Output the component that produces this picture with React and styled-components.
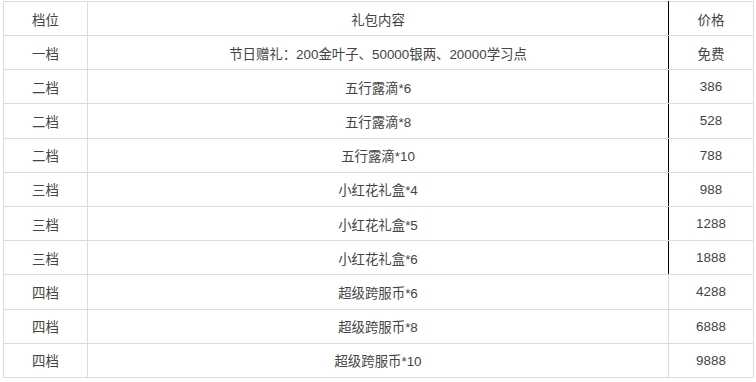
import styled, { createGlobalStyle } from "styled-components";

const GlobalStyle = createGlobalStyle`
  body {
    margin: 0;
    background: #fff;
    font-family: "Liberation Sans", "Noto Sans CJK SC", sans-serif;
  }
`;

const Wrapper = styled.div`
  padding: 1px 4px 0 3px;
`;

const Table = styled.table`
  width: 750px;
  height: 377px;
  border-collapse: collapse;
  table-layout: fixed;
  font-size: 13.4px;
  color: #444;
`;

const Cell = styled.td`
  border: 1px solid #dcdcdc;
  text-align: center;
  vertical-align: middle;
  padding: 0;
  height: 33px;
  ${(p) => p.$marked && "border-right: 1px solid #000;"}
`;

const HeadCell = styled(Cell).attrs({ as: "th" })`
  font-weight: normal;
`;

const rows = [
  ["一档", "节日赠礼：200金叶子、50000银两、20000学习点", "免费"],
  ["二档", "五行露滴*6", "386"],
  ["二档", "五行露滴*8", "528"],
  ["二档", "五行露滴*10", "788"],
  ["三档", "小红花礼盒*4", "988"],
  ["三档", "小红花礼盒*5", "1288"],
  ["三档", "小红花礼盒*6", "1888"],
  ["四档", "超级跨服币*6", "4288"],
  ["四档", "超级跨服币*8", "6888"],
  ["四档", "超级跨服币*10", "9888"],
];

export default function App() {
  return (
    <>
      <GlobalStyle />
      <Wrapper>
        <Table>
          <colgroup>
            <col style={{ width: 84 }} />
            <col style={{ width: 581 }} />
            <col style={{ width: 85 }} />
          </colgroup>
          <thead>
            <tr>
              <HeadCell>档位</HeadCell>
              <HeadCell $marked>礼包内容</HeadCell>
              <HeadCell>价格</HeadCell>
            </tr>
          </thead>
          <tbody>
            {rows.map((r, i) => (
              <tr key={i}>
                <Cell>{r[0]}</Cell>
                <Cell $marked={i < 7}>{r[1]}</Cell>
                <Cell>{r[2]}</Cell>
              </tr>
            ))}
          </tbody>
        </Table>
      </Wrapper>
    </>
  );
}
